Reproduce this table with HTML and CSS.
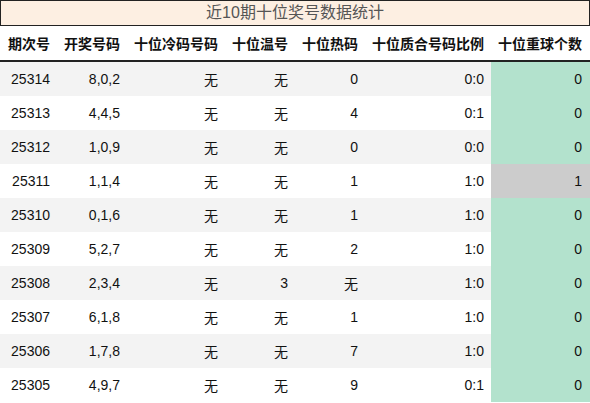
FILE: index.html
```html
<!DOCTYPE html>
<html lang="zh">
<head>
<meta charset="utf-8">
<link rel="stylesheet" href="styles.css">
</head>
<body>
<div class="title">近10期十位奖号数据统计</div>
<table class="stats">
  <colgroup>
    <col class="c1"><col class="c2"><col class="c3"><col class="c4"><col class="c5"><col class="c6"><col class="c7">
  </colgroup>
  <thead>
    <tr><th>期次号</th><th>开奖号码</th><th>十位冷码号码</th><th>十位温号</th><th>十位热码</th><th>十位质合号码比例</th><th>十位重球个数</th></tr>
  </thead>
  <tbody>
    <tr><td>25314</td><td>8,0,2</td><td>无</td><td>无</td><td>0</td><td>0:0</td><td class="rep">0</td></tr>
    <tr><td>25313</td><td>4,4,5</td><td>无</td><td>无</td><td>4</td><td>0:1</td><td class="rep">0</td></tr>
    <tr><td>25312</td><td>1,0,9</td><td>无</td><td>无</td><td>0</td><td>0:0</td><td class="rep">0</td></tr>
    <tr><td>25311</td><td>1,1,4</td><td>无</td><td>无</td><td>1</td><td>1:0</td><td class="rep hit">1</td></tr>
    <tr><td>25310</td><td>0,1,6</td><td>无</td><td>无</td><td>1</td><td>1:0</td><td class="rep">0</td></tr>
    <tr><td>25309</td><td>5,2,7</td><td>无</td><td>无</td><td>2</td><td>1:0</td><td class="rep">0</td></tr>
    <tr><td>25308</td><td>2,3,4</td><td>无</td><td>3</td><td>无</td><td>1:0</td><td class="rep">0</td></tr>
    <tr><td>25307</td><td>6,1,8</td><td>无</td><td>无</td><td>1</td><td>1:0</td><td class="rep">0</td></tr>
    <tr><td>25306</td><td>1,7,8</td><td>无</td><td>无</td><td>7</td><td>1:0</td><td class="rep">0</td></tr>
    <tr><td>25305</td><td>4,9,7</td><td>无</td><td>无</td><td>9</td><td>0:1</td><td class="rep">0</td></tr>
  </tbody>
</table>
</body>
</html>
```
FILE: styles.css
```css
html, body {
  margin: 0;
  padding: 0;
  background: #ffffff;
}
body {
  width: 590px;
  font-family: "Liberation Sans", Arial, "Noto Sans CJK SC", sans-serif;
  font-size: 14px;
  color: #111;
}
.title {
  box-sizing: border-box;
  height: 26px;
  line-height: 24px;
  border: 1px solid #222;
  background: #fdefe2;
  color: #555;
  font-size: 16px;
  text-align: center;
}
.stats {
  width: 590px;
  table-layout: fixed;
  border-collapse: separate;
  border-spacing: 0;
}
.c1 { width: 57px; }
.c2 { width: 70px; }
.c3 { width: 98px; }
.c4 { width: 70px; }
.c5 { width: 70px; }
.c6 { width: 126px; }
.c7 { width: 99px; }
.stats th, .stats td {
  padding: 0 7px 0 0;
  text-align: right;
  white-space: nowrap;
}
.stats th {
  height: 34px;
  font-weight: bold;
  color: #111;
  border-bottom: 2px solid #222;
}
.stats td {
  height: 34px;
}
.stats th:last-child, .stats td:last-child {
  padding-right: 8px;
}
.stats tbody tr:nth-child(odd) td {
  background: #f3f3f3;
}
.stats tbody tr td.rep {
  background: #b3e2cd;
}
.stats tbody tr td.rep.hit {
  background: #cccccc;
}
```
